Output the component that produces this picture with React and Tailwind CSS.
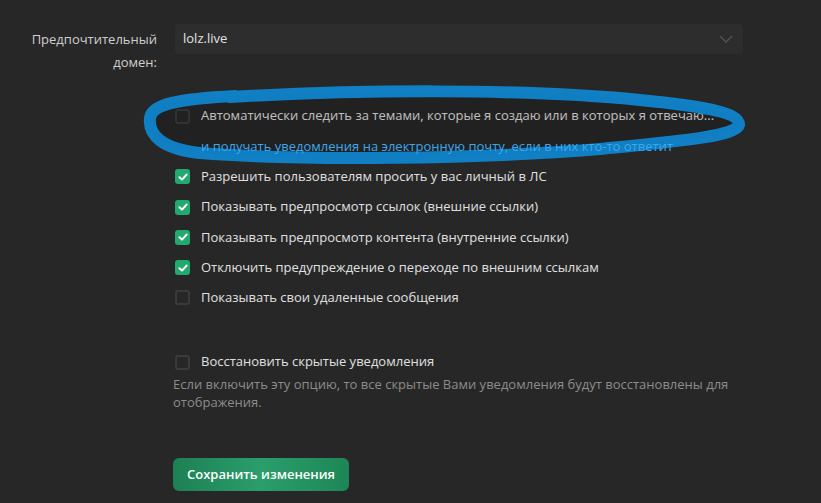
import React from "react";

const font = { fontFamily: '"Open Sans", "Noto Sans", sans-serif' };

const CheckBox = ({ checked }) =>
  checked ? (
    <span className="flex h-[15px] w-[15px] shrink-0 items-center justify-center rounded-[3px] bg-[#22a96d]">
      <svg width="10" height="10" viewBox="0 0 10 10">
        <path d="M1.5 5.2 L4 7.6 L8.6 2.6" fill="none" stroke="#fff" strokeWidth="2" strokeLinecap="round" strokeLinejoin="round" />
      </svg>
    </span>
  ) : (
    <span className="h-[15px] w-[15px] shrink-0 rounded-[3px] border-2 border-[#3b3b3b]" />
  );

const options = [
  { text: "Автоматически следить за темами, которые я создаю или в которых я отвечаю...", checked: false },
  { text: "и получать уведомления на электронную почту, если в них кто-то ответит", checked: false, hidden: true },
  { text: "Разрешить пользователям просить у вас личный в ЛС", checked: true },
  { text: "Показывать предпросмотр ссылок (внешние ссылки)", checked: true },
  { text: "Показывать предпросмотр контента (внутренние ссылки)", checked: true },
  { text: "Отключить предупреждение о переходе по внешним ссылкам", checked: true },
  { text: "Показывать свои удаленные сообщения", checked: false },
];

export default function App() {
  return (
    <div className="relative h-[503px] w-[821px] overflow-hidden bg-[#272727] text-[13px]" style={font}>
      <div className="flex pt-6">
        <div className="w-[157px] pt-[4px] text-right leading-[23px] text-[#cfcfcf]">
          Предпочтительный
          <br />
          домен:
        </div>
        <div className="ml-[18px] flex w-[568px] flex-col">
          <div className="flex h-[30px] items-center justify-between rounded-sm bg-[#2d2d2d] pl-[8px] pr-[10px] text-[#e2e2e2]">
            <span>lolz.live</span>
            <svg width="14" height="8" viewBox="0 0 14 8">
              <path d="M1 1 L7 7 L13 1" fill="none" stroke="#4f4f4f" strokeWidth="1.6" />
            </svg>
          </div>

          <div className="mt-[47px] flex flex-col">
            {options.map((o, i) => (
              <div key={i} className="flex h-[30.3px] items-center gap-[11px]">
                {o.hidden ? (
                  <span className="h-[15px] w-[15px] shrink-0 rounded-[3px] border-2 border-[#2f2f2f] opacity-40" />
                ) : (
                  <CheckBox checked={o.checked} />
                )}
                <span className={o.hidden ? "relative z-10 text-[#3ca8ec]" : "text-[#e0e0e0]"}>{o.text}</span>
              </div>
            ))}
          </div>

          <div className="mt-[38px] flex h-[22px] items-center gap-[11px]">
            <CheckBox checked={false} />
            <span className="text-[#e0e0e0]">Восстановить скрытые уведомления</span>
          </div>
          <p className="mt-[2px] -ml-[2px] leading-[18px] text-[#8c8c8c]">
            Если включить эту опцию, то все скрытые Вами уведомления будут восстановлены для отображения.
          </p>

          <div className="mt-[47px] -ml-[2px]">
            <button className="h-[33px] rounded-md bg-gradient-to-r from-[#1d8053] via-[#2a9e6c] to-[#1e8656] px-[14px] font-semibold text-white">
              Сохранить изменения
            </button>
          </div>
        </div>
      </div>

      {/* hand-drawn highlight */}
      <svg className="pointer-events-none absolute left-0 top-0" width="821" height="503" viewBox="0 0 821 503">
        <path
          d="M230 97 C 350 90, 520 88, 640 100 C 700 106, 740 112, 739 125 C 736 136, 680 141, 600 149 C 480 159, 300 161, 200 153 C 162 149, 148 135, 150 118 C 152 104, 178 99, 235 96"
          fill="rgba(0,0,0,0.15)"
          stroke="#0f84cc"
          strokeWidth="12"
          strokeLinecap="round"
          strokeLinejoin="round"
          strokeOpacity="0.95"
        />
      </svg>
    </div>
  );
}
